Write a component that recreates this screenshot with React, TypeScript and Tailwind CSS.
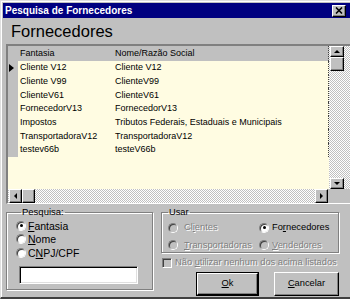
import React from 'react';

const rows = [
  ['Cliente V12', 'Cliente V12'],
  ['Cliente V99', 'ClienteV99'],
  ['ClienteV61', 'ClienteV61'],
  ['FornecedorV13', 'FornecedorV13'],
  ['Impostos', 'Tributos Federais, Estaduais e Municipais'],
  ['TransportadoraV12', 'TransportadoraV12'],
  ['testev66b', 'testeV66b'],
];

const checker = 'bg-[image:repeating-conic-gradient(#c0c0c0_0_25%,#ffffff_0_50%)] bg-[length:2px_2px]';
const raised =
  'flex items-center justify-center bg-[#c0c0c0] border-t border-l border-t-white border-l-white border-b border-r border-b-black border-r-black shadow-[inset_-1px_-1px_0_#808080]';
const disabled = 'text-[#808080] [text-shadow:1px_1px_0_#ffffff]';

const Arrow = ({ dir }: { dir: 'up' | 'down' | 'left' | 'right' }) => {
  const pts = {
    up: '0,3 6,3 3,0',
    down: '0,0 6,0 3,3',
    left: '3,0 3,6 0,3',
    right: '0,0 0,6 3,3',
  }[dir];
  const vertical = dir === 'up' || dir === 'down';
  return (
    <svg width={vertical ? 6 : 3} height={vertical ? 3 : 6}>
      <polygon points={pts} fill="#000" />
    </svg>
  );
};

const Radio = ({ checked, off }: { checked?: boolean; off?: boolean }) => (
  <div className="w-[10px] h-[10px] rounded-full border border-t-[#808080] border-l-[#808080] border-b-white border-r-white shrink-0">
    <div
      className={`w-full h-full rounded-full flex items-center justify-center shadow-[inset_1px_1px_0_#404040] ${off ? 'bg-[#c0c0c0]' : 'bg-white'}`}
    >
      {checked && <div className="w-[3px] h-[3px] rounded-full bg-black" />}
    </div>
  </div>
);

const Opt = ({ label, u, checked, off, gap }: { label: string; u: number; checked?: boolean; off?: boolean; gap: string }) => (
  <div className={`flex items-center ${gap}`}>
    <Radio checked={checked} off={off} />
    <span className={`whitespace-nowrap ${off ? disabled : 'text-black'}`}>
      {label.slice(0, u)}
      <span className="underline underline-offset-1">{label[u]}</span>
      {label.slice(u + 1)}
    </span>
  </div>
);

export default function App() {
  return (
    <div className="w-[350px] h-[299px] overflow-hidden bg-[#c0c0c0] font-['Liberation_Sans',Arial,sans-serif] text-[10px] leading-none select-none border-t border-l border-t-[#dfdfdf] border-l-[#dfdfdf] border-b-2 border-b-[#404040]">
      <div className="pt-[1px] pl-[1px] border-t border-l border-t-white border-l-white h-full flex flex-col">
        {/* title bar */}
        <div className="h-[15px] bg-[#000080] flex items-center justify-between pl-[2px] pr-[4px]">
          <span className="text-white font-bold text-[10px]">Pesquisa de Fornecedores</span>
          <div className={`${raised} w-[14px] h-[12px]`}>
            <svg width="8" height="7" viewBox="0 0 8 7">
              <path d="M1 0.5 L7 6.5 M7 0.5 L1 6.5" stroke="#000" strokeWidth="1.6" />
            </svg>
          </div>
        </div>

        <div className="pl-[8px] pt-[5px] h-[26px] text-[16.5px] text-black">Fornecedores</div>

        {/* grid */}
        <div className="ml-[3px] h-[160px] border-t-2 border-l-2 border-t-[#808080] border-l-[#808080] border-b border-b-white flex flex-col text-[9px]">
          <div className="flex flex-1 min-h-0">
            <div className="w-[322px] bg-[#fffce2] flex flex-col">
              <div className="flex h-[15px] items-center bg-[#c0c0c0] text-black shrink-0">
                <div className="w-[10px]" />
                <div className="w-[95px] pl-[2px]">Fantasia</div>
                <div className="w-[216px] pl-[2px] h-full flex items-center border-r border-dotted border-r-[#404040]">Nome/Razão Social</div>
              </div>
              {rows.map(([a, b], i) => (
                <div key={i} className="flex h-[13.7px] items-center text-black shrink-0">
                  <div className="w-[10px] h-full bg-[#c0c0c0] flex items-center pl-[1px]">
                    {i === 0 && (
                      <svg width="5" height="8">
                        <polygon points="0,0 5,4 0,8" fill="#000" />
                      </svg>
                    )}
                  </div>
                  <div className="w-[95px] pl-[2px] whitespace-nowrap">{a}</div>
                  <div className="w-[216px] pl-[2px] h-full flex items-center whitespace-nowrap border-r border-dotted border-r-[#404040]">{b}</div>
                </div>
              ))}
            </div>
            <div className={`w-[22px] ${checker} flex flex-col justify-between pl-[1px]`}>
              <div>
                <div className={`${raised} w-[14px] h-[11px]`}>
                  <Arrow dir="up" />
                </div>
                <div className={`${raised} w-[14px] h-[14px]`} />
              </div>
              <div className={`${raised} w-[14px] h-[11px]`}>
                <Arrow dir="down" />
              </div>
            </div>
          </div>
          <div className="flex h-[14px] shrink-0">
            <div className={`w-[322px] ${checker} flex pl-[1px]`}>
              <div className={`${raised} w-[13px] h-full`}>
                <Arrow dir="left" />
              </div>
              <div className={`${raised} w-[13px] h-full`} />
              <div className="flex-1" />
              <div className={`${raised} w-[13px] h-full`}>
                <Arrow dir="right" />
              </div>
            </div>
            <div className="w-[22px] bg-[#c0c0c0]" />
          </div>
        </div>

        {/* bottom */}
        <div className="flex mt-[2px]">
          <fieldset className="ml-[3px] w-[147px] h-[84px] border border-[#808080] shadow-[inset_1px_1px_0_#ffffff,1px_1px_0_#ffffff] pl-[9px]">
            <legend className="ml-[5px] px-[1px] h-[12px] leading-[12px] text-[9.5px] text-black">Pesquisa:</legend>
            <div className="flex flex-col pt-[1px] text-[10.5px]">
              <div className="h-[13.5px] flex items-center"><Opt label="Fantasia" u={0} checked gap="gap-[2px]" /></div>
              <div className="h-[13.5px] flex items-center"><Opt label="Nome" u={0} gap="gap-[2px]" /></div>
              <div className="h-[13.5px] flex items-center"><Opt label="CNPJ/CPF" u={1} gap="gap-[2px]" /></div>
              <div className="mt-[6px] ml-[3px] w-[119px] h-[18px] bg-white border border-t-[#808080] border-l-[#808080] border-b-white border-r-white shadow-[inset_1px_1px_0_#000000,inset_-1px_-1px_0_#dfdfdf]" />
            </div>
          </fieldset>

          <div className="ml-[8px] w-[178px] flex flex-col text-[9.3px]">
            <fieldset className="w-[178px] h-[47px] border border-[#808080] shadow-[inset_1px_1px_0_#ffffff,1px_1px_0_#ffffff] pl-[6px]">
              <legend className="ml-[0px] px-[1px] h-[12px] leading-[12px] text-black">Usar</legend>
              <div className="grid grid-cols-[91px_1fr] pt-[1px]">
                <div className="h-[17.5px] flex items-center"><Opt label="Clientes" u={2} off gap="gap-[6px]" /></div>
                <div className="h-[17.5px] flex items-center"><Opt label="Fornecedores" u={2} checked gap="gap-[3px]" /></div>
                <div className="h-[17.5px] flex items-center"><Opt label="Transportadoras" u={0} off gap="gap-[6px]" /></div>
                <div className="h-[17.5px] flex items-center"><Opt label="Vendedores" u={0} off gap="gap-[3px]" /></div>
              </div>
            </fieldset>
            <div className="mt-[4px] h-[11px] flex items-center gap-[3px] pl-[1px]">
              <div className="w-[10px] h-[10px] shrink-0 border border-t-[#808080] border-l-[#808080] border-b-white border-r-white shadow-[inset_1px_1px_0_#404040] bg-[#c0c0c0]" />
              <span className={`whitespace-nowrap ${disabled}`}>
                Não <span className="underline underline-offset-1">u</span>tilizar nenhum dos acima listados
              </span>
            </div>
            <div className="mt-[4px] flex justify-between pl-[35px]">
              <div className="w-[63px] h-[24px] border border-black">
                <div className={`${raised} w-full h-full text-black`}>
                  <span><span className="underline underline-offset-1">O</span>k</span>
                </div>
              </div>
              <div className={`${raised} w-[65px] h-[24px] text-black`}>
                <span><span className="underline underline-offset-1">C</span>ancelar</span>
              </div>
            </div>
          </div>
        </div>
      </div>
    </div>
  );
}
